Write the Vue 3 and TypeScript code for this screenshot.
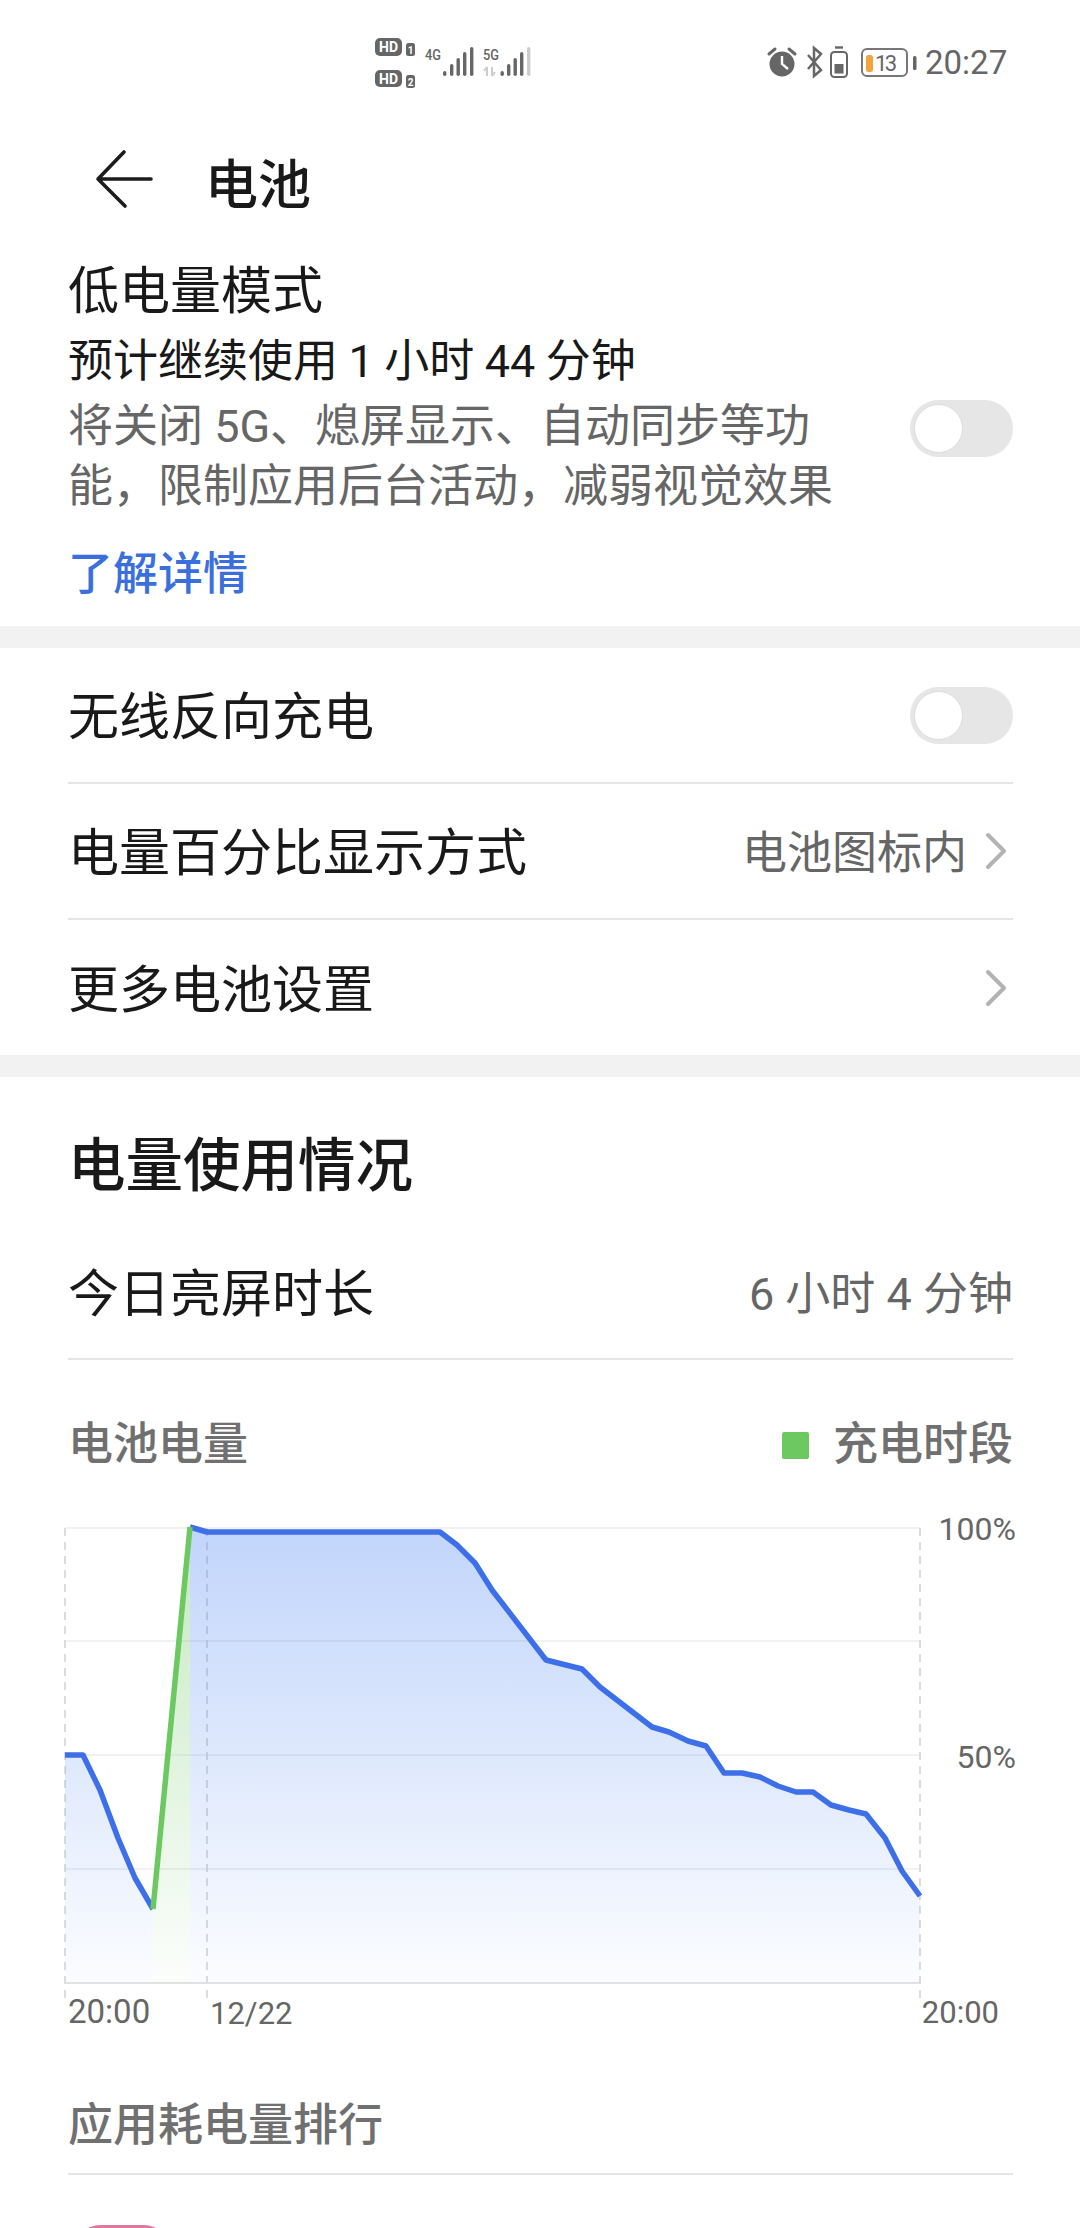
<script setup lang="ts">
const blue: [number, number][] = [
  [190, 1527], [207, 1532], [440, 1532], [457, 1545], [475, 1563], [492, 1590], [546, 1660], [582, 1669],
  [600, 1687], [652, 1727], [669, 1732], [688, 1741], [706, 1746], [724, 1773], [742, 1773], [760, 1777],
  [778, 1786], [796, 1792], [813, 1792], [831, 1805], [849, 1810], [866, 1814], [885, 1838], [902, 1871], [920, 1896],
]
const early: [number, number][] = [[65, 1755], [83, 1755], [100, 1790], [118, 1838], [135, 1878], [153, 1909]]
const charge: [number, number][] = [[153, 1909], [170, 1733], [190, 1527]]
const pts = (list: [number, number][]) => list.map((p) => p.join(',')).join(' ')
const area = (list: [number, number][]) =>
  `${list[0][0]},1983 ${pts(list)} ${list[list.length - 1][0]},1983`
const gridY = [1528, 1641, 1755, 1869]
const dashX = [65, 207, 920]
const leftBars = [[443, 71], [450, 64], [456.5, 58], [463, 52], [470, 47]]
const rightBars = [[500.5, 71], [507, 64], [513.5, 58], [520, 52], [527, 47]]
</script>

<template>
  <div class="page">
    <div class="status">
      <svg class="sim" width="170" height="60" viewBox="370 34 170 60">
        <g fill="#666">
          <rect x="375" y="38" width="27" height="18" rx="5" />
          <rect x="406" y="43" width="9" height="13" rx="2.5" />
          <rect x="375" y="70" width="27" height="17" rx="5" />
          <rect x="406" y="75" width="9" height="13" rx="2.5" />
        </g>
        <g fill="#fff" font-family="Roboto, sans-serif" font-weight="700" text-anchor="middle">
          <text x="388.5" y="52" font-size="14">HD</text>
          <text x="388.5" y="84" font-size="14">HD</text>
          <text x="410.5" y="54" font-size="10">1</text>
          <text x="410.5" y="86" font-size="10">2</text>
        </g>
        <g fill="#666" font-family="Roboto, sans-serif" font-weight="500" font-size="15">
          <text x="425" y="60" textLength="16" lengthAdjust="spacingAndGlyphs">4G</text>
          <text x="483" y="60" textLength="16" lengthAdjust="spacingAndGlyphs">5G</text>
        </g>
        <rect v-for="b in leftBars" :key="b[0]" :x="b[0]" :y="b[1]" width="3.4" :height="76 - b[1]" rx="1.7" fill="#666" />
        <rect v-for="(b, i) in rightBars" :key="b[0]" :x="b[0]" :y="b[1]" width="3.4" :height="76 - b[1]" rx="1.7" :fill="i === 4 ? '#ccc' : '#666'" />
        <path d="M487 76v-9M487 67l-3 4M492 67v9M492 76l3-4" stroke="#ccc" stroke-width="2" fill="none" />
      </svg>
      <svg class="sys" width="156" height="40" viewBox="764 43 156 40">
        <circle cx="782" cy="64" r="12.5" fill="#666" />
        <path d="M782 56v8l6 5" stroke="#fff" stroke-width="2.4" fill="none" />
        <path d="M769 54l6-5M795 54l-6-5" stroke="#666" stroke-width="3" stroke-linecap="round" />
        <path d="M808 55l13 15-7 6V48l7 6-13 15" stroke="#666" stroke-width="2.5" fill="none" />
        <rect x="831" y="52" width="16" height="25" rx="3.5" stroke="#666" stroke-width="2" fill="none" />
        <path d="M835 47.5h8" stroke="#666" stroke-width="2.4" />
        <rect x="834.5" y="64" width="9" height="9.5" fill="#666" />
        <rect x="862" y="49" width="45" height="27" rx="5" stroke="#777" stroke-width="2" fill="none" />
        <rect x="866" y="55" width="7" height="17" rx="2.5" fill="#f2a33a" />
        <text x="875" y="71" font-family="Roboto, sans-serif" font-size="22" fill="#666" textLength="22">13</text>
        <rect x="913" y="56" width="3.5" height="14" rx="1.5" fill="#666" />
      </svg>
      <span class="time">20:27</span>
    </div>

    <header class="nav">
      <svg width="60" height="60" viewBox="92 150 60 60" class="back">
        <path d="M150 180H97M123 153L97 180l27 27" stroke="#1c1c1c" stroke-width="3.6" stroke-linecap="round" stroke-linejoin="round" fill="none" />
      </svg>
      <h1>电池</h1>
    </header>

    <section class="low">
      <div class="low-title">低电量模式</div>
      <div class="low-time">预计继续使用 1 小时 44 分钟</div>
      <div class="low-body">
        <p>将关闭 5G、熄屏显示、自动同步等功能，限制应用后台活动，减弱视觉效果</p>
        <span class="toggle top"><i></i></span>
      </div>
      <div class="link">了解详情</div>
    </section>

    <div class="gap"></div>

    <section class="rows">
      <div class="row">
        <span class="label">无线反向充电</span>
        <span class="toggle"><i></i></span>
      </div>
      <div class="row">
        <span class="label">电量百分比显示方式</span>
        <span class="value"><span class="label">电池图标内</span>
          <svg width="22" height="38" viewBox="0 0 22 38"><path d="M3 3l16 16L3 35" stroke="#b3b3b3" stroke-width="4" stroke-linecap="round" stroke-linejoin="round" fill="none" /></svg>
        </span>
      </div>
      <div class="row last">
        <span class="label">更多电池设置</span>
        <span class="value">
          <svg width="22" height="38" viewBox="0 0 22 38"><path d="M3 3l16 16L3 35" stroke="#b3b3b3" stroke-width="4" stroke-linecap="round" stroke-linejoin="round" fill="none" /></svg>
        </span>
      </div>
    </section>

    <div class="gap"></div>

    <section class="usage">
      <h2>电量使用情况</h2>
      <div class="screen">
        <span>今日亮屏时长</span>
        <span class="grey">6 小时 4 分钟</span>
      </div>
      <div class="legend">
        <span>电池电量</span>
        <span class="charging"><i></i>充电时段</span>
      </div>
    </section>

    <svg class="chart" width="1080" height="540" viewBox="0 1500 1080 540">
      <defs>
        <linearGradient id="blueFill" gradientUnits="userSpaceOnUse" x1="0" y1="1528" x2="0" y2="1983">
          <stop offset="0" stop-color="#3f7cf2" stop-opacity="0.32" />
          <stop offset="1" stop-color="#3f7cf2" stop-opacity="0.02" />
        </linearGradient>
        <linearGradient id="greenFill" gradientUnits="userSpaceOnUse" x1="0" y1="1528" x2="0" y2="1983">
          <stop offset="0" stop-color="#6cc860" stop-opacity="0.4" />
          <stop offset="1" stop-color="#6cc860" stop-opacity="0.02" />
        </linearGradient>
      </defs>
      <line v-for="y in gridY" :key="y" x1="65" x2="920" :y1="y" :y2="y" stroke="#f1f1f1" stroke-width="2" />
      <line v-for="x in dashX" :key="x" :x1="x" :x2="x" y1="1528" y2="2000" stroke="#dcdcdc" stroke-width="2" stroke-dasharray="8 6" />
      <line x1="65" x2="920" y1="1983" y2="1983" stroke="#e2e2e2" stroke-width="2" />
      <polygon :points="area(early)" fill="url(#blueFill)" />
      <polygon :points="area(charge)" fill="url(#greenFill)" />
      <polygon :points="area(blue)" fill="url(#blueFill)" />
      <polyline :points="pts(early)" fill="none" stroke="#3d6fe8" stroke-width="5.5" stroke-linejoin="round" />
      <polyline :points="pts(blue)" fill="none" stroke="#3d6fe8" stroke-width="5.5" stroke-linejoin="round" />
      <polyline :points="pts(charge)" fill="none" stroke="#6cc860" stroke-width="5.5" stroke-linejoin="round" />
      <g font-family="Roboto, sans-serif" font-size="32" fill="#666">
        <text x="1016" y="1540" text-anchor="end">100%</text>
        <text x="1016" y="1768" text-anchor="end">50%</text>
        <text x="68" y="2023" font-size="33">20:00</text>
        <text x="210" y="2024" font-size="31">12/22</text>
        <text x="999" y="2023" font-size="31" text-anchor="end">20:00</text>
      </g>
    </svg>

    <section class="rank">
      <div class="rank-title">应用耗电量排行</div>
      <div class="app-icon"></div>
    </section>
  </div>
</template>

<style>
html, body { margin: 0; background: #fff; }
</style>

<style scoped>
.page {
  width: 1080px;
  height: 2228px;
  overflow: hidden;
  background: #fff;
  color: #191919;
  font-family: Roboto, "Noto Sans CJK SC", sans-serif;
}
.status {
  height: 90px;
  display: flex;
}
.sim { margin-left: 370px; margin-top: 34px; display: block; }
.sys { margin-left: 224px; margin-top: 43px; display: block; }
.time {
  margin-left: 5px;
  margin-top: 43px;
  font-size: 33px;
  line-height: 40px;
  color: #666;
}
.nav {
  height: 150px;
  display: flex;
  align-items: flex-start;
  box-sizing: border-box;
  padding-top: 59px;
}
.back { margin-left: 93px; display: block; }
h1 {
  margin: 2px 0 0 52px;
  font-size: 53px;
  line-height: 70px;
  font-weight: 500;
}
.low { padding: 18px 67px 0 68px; height: 386px; box-sizing: border-box; }
.low-title { font-size: 51px; line-height: 68px; }
.low-time { font-size: 45px; line-height: 60px; margin-top: 6px; word-spacing: -0.7px; }
.low-body {
  display: flex;
  align-items: flex-start;
  justify-content: space-between;
  margin-top: 5px;
}
.low-body p {
  margin: 0;
  width: 765px;
  font-size: 45px;
  line-height: 60px;
  color: #666;
}
.toggle.top { margin-top: 3px; }
.link {
  margin-top: 28px;
  font-size: 45px;
  line-height: 60px;
  color: #3a6fdd;
  font-weight: 500;
}
.gap { height: 22px; background: #f2f2f2; }
.rows { padding: 0 67px 0 68px; }
.row {
  height: 136px;
  display: flex;
  align-items: center;
  justify-content: space-between;
  font-size: 51px;
  line-height: 68px;
  border-bottom: 2px solid #e5e5e5;
  box-sizing: border-box;
}
.row.last { border-bottom: 0; height: 135px; }
.label { padding-top: 6px; }
.value {
  display: flex;
  align-items: center;
  gap: 18px;
  font-size: 45px;
  color: #666;
  margin-right: 6px;
}
.toggle {
  width: 103px;
  height: 57px;
  border-radius: 29px;
  background: #e6e6e6;
  display: flex;
  align-items: center;
  padding-left: 4px;
  box-sizing: border-box;
  flex: none;
}
.toggle i {
  width: 49px;
  height: 49px;
  box-sizing: border-box;
  border-radius: 50%;
  background: #fff;
  border: 1px solid #dcdcdc;
  display: block;
}
.usage { padding: 55px 67px 0 68px; }
h2 { margin: 0; font-size: 57.5px; line-height: 70px; font-weight: 500; }
.screen {
  display: flex;
  justify-content: space-between;
  padding: 58px 0 28px;
  font-size: 51px;
  line-height: 70px;
  border-bottom: 2px solid #e5e5e5;
}
.grey { font-size: 45px; color: #666; }
.legend {
  display: flex;
  justify-content: space-between;
  padding-top: 51px;
  font-size: 45px;
  line-height: 68px;
  color: #707070;
  font-weight: 500;
  height: 119px;
  box-sizing: border-box;
  margin-bottom: 21px;
}
.charging { display: flex; align-items: center; }
.charging i {
  width: 27px;
  height: 27px;
  background: #6cc860;
  border-radius: 2px;
  margin-right: 24px;
  display: block;
}
.chart { display: block; }
.rank { padding: 51px 67px 0 68px; }
.rank-title {
  font-size: 45px;
  line-height: 70px;
  color: #707070;
  font-weight: 500;
  padding-bottom: 12px;
  border-bottom: 2px solid #e5e5e5;
}
.app-icon {
  margin: 50px 0 0 8px;
  width: 92px;
  height: 92px;
  border-radius: 24px;
  background: #e0779c;
}
</style>
